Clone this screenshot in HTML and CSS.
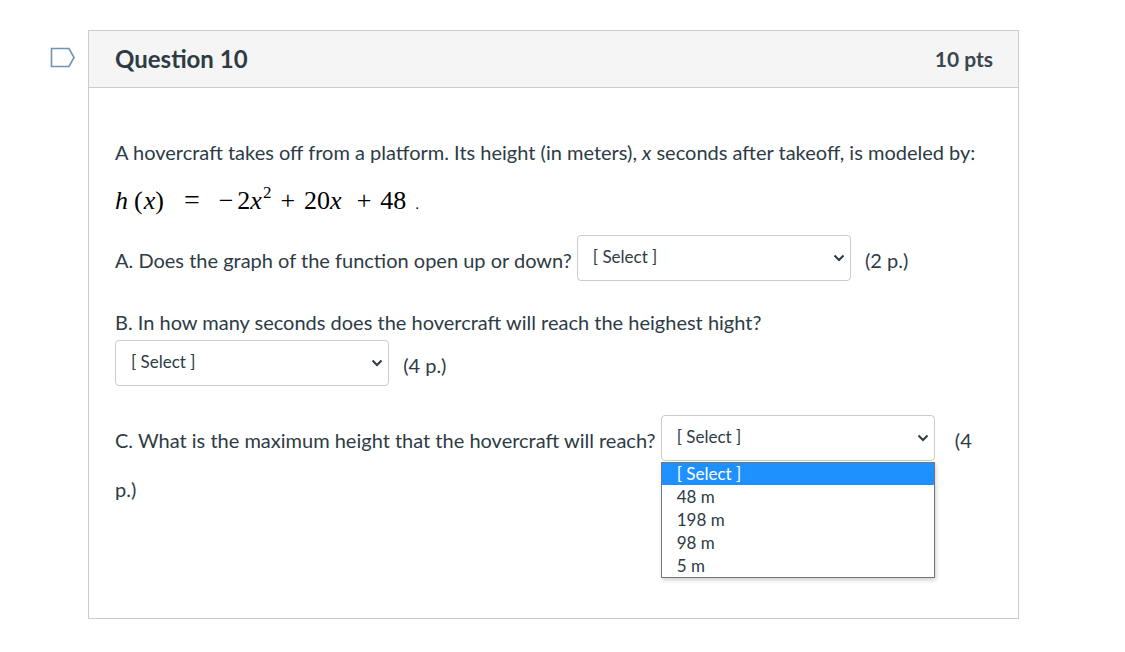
FILE: index.html
```html
<!DOCTYPE html>
<html>
<head>
<meta charset="utf-8">
<link rel="stylesheet" href="styles.css">
</head>
<body>
<div class="page">
  <div class="flag-col">
    <svg class="flag" width="26" height="21" viewBox="0 0 26 21"><path d="M1.5 1.5 H19 L24 10.5 L19 19.5 H1.5 Z" fill="none" stroke="#6f93b4" stroke-width="1.6"/></svg>
  </div>
  <div class="card">
    <div class="card-header">
      <span class="q-title">Question 10</span>
      <span class="q-pts">10 pts</span>
    </div>
    <div class="card-body">
      <p class="intro">A hovercraft takes off from a platform. Its height (in meters), <i>x</i> seconds after takeoff, is modeled by:</p>
      <p class="math"><span class="mi">h</span><span class="mo paren">(</span><span class="mi">x</span><span class="mo">)</span><span class="mrel">=</span><span class="mo minus">−</span><span class="mn">2</span><span class="mi">x</span><sup class="sup">2</sup><span class="mbin">+</span><span class="mn">20</span><span class="mi">x</span><span class="mbin wide">+</span><span class="mn">48</span><span class="dot">.</span></p>
      <p class="part">A. Does the graph of the function open up or down? <span class="select"><span class="sel-text">[ Select ]</span><svg class="chev" width="12" height="8" viewBox="0 0 12 8"><path d="M1.5 1.5 L6 6 L10.5 1.5" fill="none" stroke="#2d3b45" stroke-width="2"/></svg></span> <span class="pts-note">(2 p.)</span></p>
      <p class="part">B. In how many seconds does the hovercraft will reach the heighest hight?<br><span class="select"><span class="sel-text">[ Select ]</span><svg class="chev" width="12" height="8" viewBox="0 0 12 8"><path d="M1.5 1.5 L6 6 L10.5 1.5" fill="none" stroke="#2d3b45" stroke-width="2"/></svg></span> <span class="pts-note">(4 p.)</span></p>
      <p class="part">C. What is the maximum height that the hovercraft will reach? <span class="select open"><span class="sel-text">[ Select ]</span><svg class="chev" width="12" height="8" viewBox="0 0 12 8"><path d="M1.5 1.5 L6 6 L10.5 1.5" fill="none" stroke="#2d3b45" stroke-width="2"/></svg><span class="listbox"><span class="opt active">[ Select ]</span><span class="opt">48 m</span><span class="opt">198 m</span><span class="opt">98 m</span><span class="opt">5 m</span></span></span> <span class="pts-note pts-c">(4</span><br>p.)</p>
    </div>
  </div>
</div>
</body>
</html>
```
FILE: styles.css
```css
html, body {
  margin: 0;
  padding: 0;
  background: #ffffff;
}
body {
  font-family: Lato, "Open Sans", sans-serif;
  color: #2d3b45;
}
.page {
  display: flex;
  padding-top: 30px;
}
.flag-col {
  width: 88px;
  flex: none;
  display: flex;
  justify-content: flex-end;
  align-items: flex-start;
}
.flag {
  margin-top: 17px;
  margin-right: 12px;
}
.card {
  width: 931px;
  box-sizing: border-box;
  border: 1px solid #c7cdd1;
  height: 589px;
}
.card-header {
  height: 57px;
  box-sizing: border-box;
  background: #f5f5f5;
  border-bottom: 1px solid #c7cdd1;
  display: flex;
  align-items: center;
  justify-content: space-between;
  padding: 0 25px 2px 26px;
}
.q-title {
  font-weight: 700;
  font-size: 24px;
}
.q-pts {
  font-weight: 700;
  font-size: 21px;
  color: #3a4650;
}
.card-body {
  padding: 49px 26px 0 26px;
  font-size: 20px;
  line-height: 30px;
}
.card-body p {
  margin: 0;
}
.intro i {
  font-style: italic;
}
.card-body .math {
  font-family: "Liberation Serif", "Times New Roman", serif;
  font-size: 26px;
  line-height: 30px;
  margin-top: 19px;
  color: #000;
}
.math .mi {
  font-style: italic;
}
.math .paren {
  margin-left: 6px;
}
.math .mo {
  margin-right: 1px;
}
.math .mrel {
  margin: 0 19px 0 19px;
  font-size: 28px;
  line-height: 0;
}
.math .minus {
  margin-right: 4px;
}
.math .mbin {
  margin: 0 9px 0 9px;
}
.math .mbin.wide {
  margin-left: 15px;
}
.math .sup {
  font-size: 17px;
  line-height: 0;
  vertical-align: 11px;
  margin-left: 1px;
}
.math .dot {
  font-size: 15px;
  margin-left: 9px;
}
.card-body .part {
  margin-top: 13px;
}
.select {
  display: inline-flex;
  align-items: center;
  justify-content: space-between;
  box-sizing: border-box;
  width: 274px;
  height: 46px;
  margin: 3px 0 13px 0;
  border: 1px solid #c7cdd1;
  border-radius: 4px;
  padding: 0 5px 0 15px;
  font-size: 17px;
  vertical-align: 5px;
  position: relative;
  line-height: 22px;
  background: #fff;
}
.sel-text {
  padding-bottom: 2px;
}
.pts-note {
  margin-left: 9px;
}
.pts-note.pts-c {
  margin-left: 15px;
}
.listbox {
  position: absolute;
  left: -1px;
  top: 46px;
  width: 274px;
  box-sizing: border-box;
  border: 1px solid #767676;
  background: #fff;
  display: flex;
  flex-direction: column;
  box-shadow: 1px 2px 4px rgba(0,0,0,0.2);
}
.opt {
  height: 23px;
  line-height: 23px;
  padding-left: 15px;
  font-size: 17px;
  color: #2d3b45;
}
.opt.active {
  background: #1e90ff;
  color: #ffffff;
  height: 22px;
  line-height: 22px;
}
```
